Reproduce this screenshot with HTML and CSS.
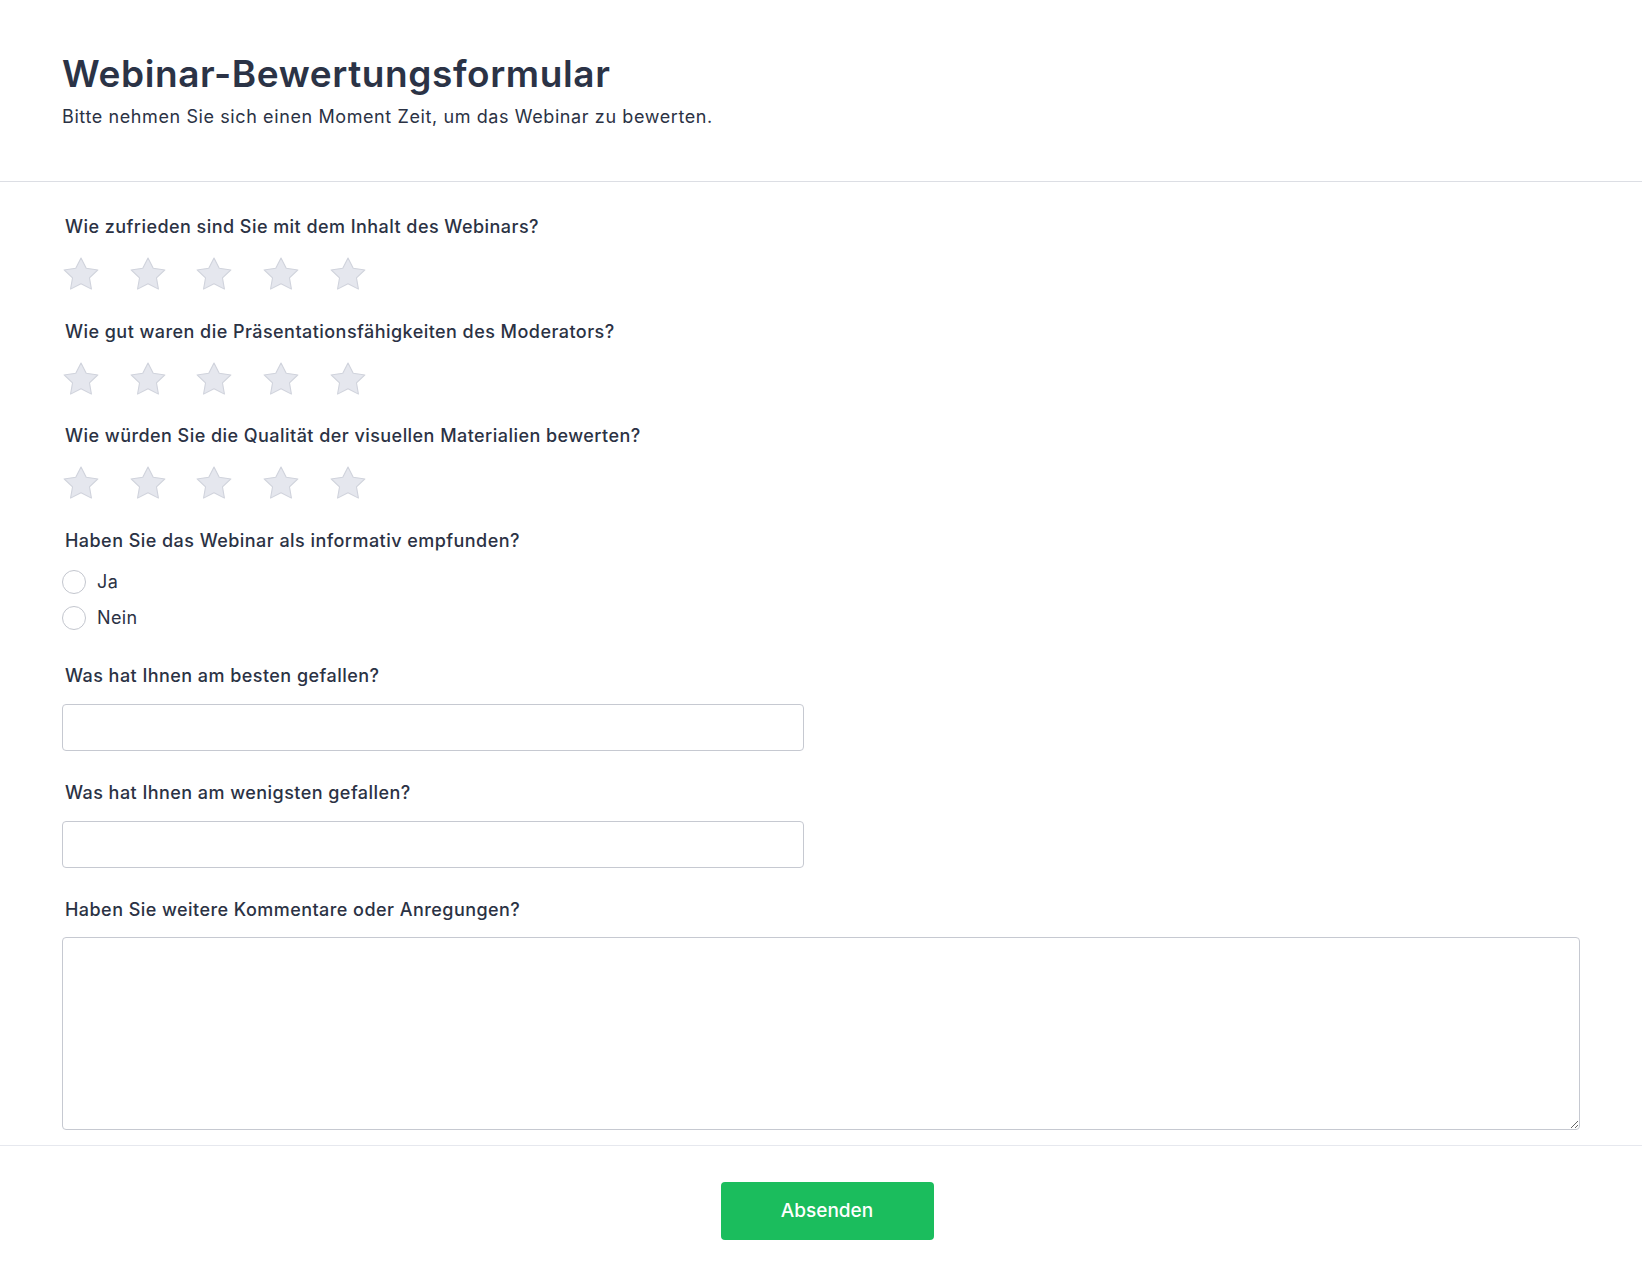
FILE: index.html
```html
<!DOCTYPE html>
<html lang="de">
<head>
<meta charset="utf-8">
<title>Webinar-Bewertungsformular</title>
<link rel="stylesheet" href="styles.css">
</head>
<body>
<header class="form-header">
  <h1 class="form-title">Webinar-Bewertungsformular</h1>
  <p class="form-subtitle">Bitte nehmen Sie sich einen Moment Zeit, um das Webinar zu bewerten.</p>
</header>
<form class="form-body">
  <div class="field rating-field">
    <label class="field-label">Wie zufrieden sind Sie mit dem Inhalt des Webinars?</label>
    <div class="stars">
      <svg class="star" viewBox="2 2 20 19.02" preserveAspectRatio="none"><path d="M12 2.6l2.9 5.9 6.5.95-4.7 4.6 1.1 6.45L12 17.45 6.2 20.5l1.1-6.45-4.7-4.6 6.5-.95z"/></svg>
      <svg class="star" viewBox="2 2 20 19.02" preserveAspectRatio="none"><path d="M12 2.6l2.9 5.9 6.5.95-4.7 4.6 1.1 6.45L12 17.45 6.2 20.5l1.1-6.45-4.7-4.6 6.5-.95z"/></svg>
      <svg class="star" viewBox="2 2 20 19.02" preserveAspectRatio="none"><path d="M12 2.6l2.9 5.9 6.5.95-4.7 4.6 1.1 6.45L12 17.45 6.2 20.5l1.1-6.45-4.7-4.6 6.5-.95z"/></svg>
      <svg class="star" viewBox="2 2 20 19.02" preserveAspectRatio="none"><path d="M12 2.6l2.9 5.9 6.5.95-4.7 4.6 1.1 6.45L12 17.45 6.2 20.5l1.1-6.45-4.7-4.6 6.5-.95z"/></svg>
      <svg class="star" viewBox="2 2 20 19.02" preserveAspectRatio="none"><path d="M12 2.6l2.9 5.9 6.5.95-4.7 4.6 1.1 6.45L12 17.45 6.2 20.5l1.1-6.45-4.7-4.6 6.5-.95z"/></svg>
    </div>
  </div>
  <div class="field rating-field">
    <label class="field-label">Wie gut waren die Präsentationsfähigkeiten des Moderators?</label>
    <div class="stars">
      <svg class="star" viewBox="2 2 20 19.02" preserveAspectRatio="none"><path d="M12 2.6l2.9 5.9 6.5.95-4.7 4.6 1.1 6.45L12 17.45 6.2 20.5l1.1-6.45-4.7-4.6 6.5-.95z"/></svg>
      <svg class="star" viewBox="2 2 20 19.02" preserveAspectRatio="none"><path d="M12 2.6l2.9 5.9 6.5.95-4.7 4.6 1.1 6.45L12 17.45 6.2 20.5l1.1-6.45-4.7-4.6 6.5-.95z"/></svg>
      <svg class="star" viewBox="2 2 20 19.02" preserveAspectRatio="none"><path d="M12 2.6l2.9 5.9 6.5.95-4.7 4.6 1.1 6.45L12 17.45 6.2 20.5l1.1-6.45-4.7-4.6 6.5-.95z"/></svg>
      <svg class="star" viewBox="2 2 20 19.02" preserveAspectRatio="none"><path d="M12 2.6l2.9 5.9 6.5.95-4.7 4.6 1.1 6.45L12 17.45 6.2 20.5l1.1-6.45-4.7-4.6 6.5-.95z"/></svg>
      <svg class="star" viewBox="2 2 20 19.02" preserveAspectRatio="none"><path d="M12 2.6l2.9 5.9 6.5.95-4.7 4.6 1.1 6.45L12 17.45 6.2 20.5l1.1-6.45-4.7-4.6 6.5-.95z"/></svg>
    </div>
  </div>
  <div class="field rating-field">
    <label class="field-label">Wie würden Sie die Qualität der visuellen Materialien bewerten?</label>
    <div class="stars">
      <svg class="star" viewBox="2 2 20 19.02" preserveAspectRatio="none"><path d="M12 2.6l2.9 5.9 6.5.95-4.7 4.6 1.1 6.45L12 17.45 6.2 20.5l1.1-6.45-4.7-4.6 6.5-.95z"/></svg>
      <svg class="star" viewBox="2 2 20 19.02" preserveAspectRatio="none"><path d="M12 2.6l2.9 5.9 6.5.95-4.7 4.6 1.1 6.45L12 17.45 6.2 20.5l1.1-6.45-4.7-4.6 6.5-.95z"/></svg>
      <svg class="star" viewBox="2 2 20 19.02" preserveAspectRatio="none"><path d="M12 2.6l2.9 5.9 6.5.95-4.7 4.6 1.1 6.45L12 17.45 6.2 20.5l1.1-6.45-4.7-4.6 6.5-.95z"/></svg>
      <svg class="star" viewBox="2 2 20 19.02" preserveAspectRatio="none"><path d="M12 2.6l2.9 5.9 6.5.95-4.7 4.6 1.1 6.45L12 17.45 6.2 20.5l1.1-6.45-4.7-4.6 6.5-.95z"/></svg>
      <svg class="star" viewBox="2 2 20 19.02" preserveAspectRatio="none"><path d="M12 2.6l2.9 5.9 6.5.95-4.7 4.6 1.1 6.45L12 17.45 6.2 20.5l1.1-6.45-4.7-4.6 6.5-.95z"/></svg>
    </div>
  </div>
  <div class="field radio-field">
    <label class="field-label">Haben Sie das Webinar als informativ empfunden?</label>
    <div class="radios">
      <label class="radio-option"><span class="radio-circle"></span><span class="radio-text">Ja</span></label>
      <label class="radio-option"><span class="radio-circle"></span><span class="radio-text">Nein</span></label>
    </div>
  </div>
  <div class="field input-field">
    <label class="field-label">Was hat Ihnen am besten gefallen?</label>
    <input class="text-input" type="text">
  </div>
  <div class="field input-field">
    <label class="field-label">Was hat Ihnen am wenigsten gefallen?</label>
    <input class="text-input" type="text">
  </div>
  <div class="field textarea-field">
    <label class="field-label">Haben Sie weitere Kommentare oder Anregungen?</label>
    <textarea class="text-area"></textarea>
  </div>
</form>
<footer class="form-footer">
  <button class="submit-btn" type="button">Absenden</button>
</footer>
</body>
</html>
```

FILE: styles.css
```css
* {
  box-sizing: border-box;
}

html, body {
  margin: 0;
  padding: 0;
  background: #ffffff;
}

body {
  font-family: Inter, "Noto Sans", "Liberation Sans", sans-serif;
  color: #2b3244;
}

.form-header {
  padding: 52px 62px 52px 62px;
  border-bottom: 1px solid #dcdee4;
}

.form-title {
  margin: 0 0 9px 0;
  font-size: 37px;
  line-height: 44px;
  font-weight: 600;
  color: #2b3346;
  letter-spacing: 0.6px;
}

.form-subtitle {
  margin: 0;
  font-size: 18px;
  line-height: 24px;
  font-weight: 400;
  color: #2b3244;
  letter-spacing: 0.6px;
}

.form-body {
  padding: 33px 62px 0 62px;
  display: flex;
  flex-direction: column;
}

.field {
  display: flex;
  flex-direction: column;
}

.field-label {
  display: block;
  padding-left: 3px;
  font-size: 18px;
  line-height: 24px;
  font-weight: 500;
  color: #2b3244;
  letter-spacing: 0.45px;
}

.rating-field {
  margin-bottom: 29.5px;
}

.rating-field .field-label {
  margin-bottom: 18px;
}

.stars {
  display: flex;
  gap: 30.7px;
  height: 33px;
  padding-left: 1px;
}

.star {
  width: 36px;
  height: 33px;
  fill: #e5e7ee;
  stroke: #d0d3dc;
  stroke-width: 0.6;
  stroke-linejoin: round;
}

.radio-field {
  margin-bottom: 28px;
}

.radio-field .field-label {
  margin-bottom: 11px;
}

.radios {
  display: flex;
  flex-direction: column;
}

.radio-option {
  display: flex;
  align-items: center;
  gap: 11px;
  height: 36px;
}

.radio-circle {
  width: 24px;
  height: 24px;
  border: 1px solid #c3c6ce;
  border-radius: 50%;
  background: #ffffff;
  flex: none;
}

.radio-text {
  font-size: 18px;
  line-height: 24px;
  color: #2b3244;
  letter-spacing: 0.4px;
}

.input-field {
  margin-bottom: 30px;
}

.input-field .field-label {
  margin-bottom: 16px;
}

.textarea-field .field-label {
  margin-bottom: 15px;
}

.text-input {
  width: 742px;
  height: 47px;
  border: 1px solid #c6c9d1;
  border-radius: 4px;
  background: #ffffff;
  font-family: inherit;
  font-size: 18px;
  padding: 0 12px;
  outline: none;
}

.text-area {
  width: 100%;
  height: 193px;
  border: 1px solid #c6c9d1;
  border-radius: 4px;
  background: #ffffff;
  font-family: inherit;
  font-size: 18px;
  padding: 12px;
  outline: none;
  resize: vertical;
  display: block;
}

.textarea-field {
  margin-bottom: 15px;
}

.form-footer {
  border-top: 1px solid #e6e8ee;
  padding: 36px 0 46px 12px;
  display: flex;
  justify-content: center;
}

.submit-btn {
  width: 213px;
  height: 58px;
  border: none;
  border-radius: 4px;
  background: #1bbd5d;
  color: #ffffff;
  font-family: inherit;
  font-size: 19px;
  font-weight: 500;
  letter-spacing: 0;
  cursor: pointer;
}
```
